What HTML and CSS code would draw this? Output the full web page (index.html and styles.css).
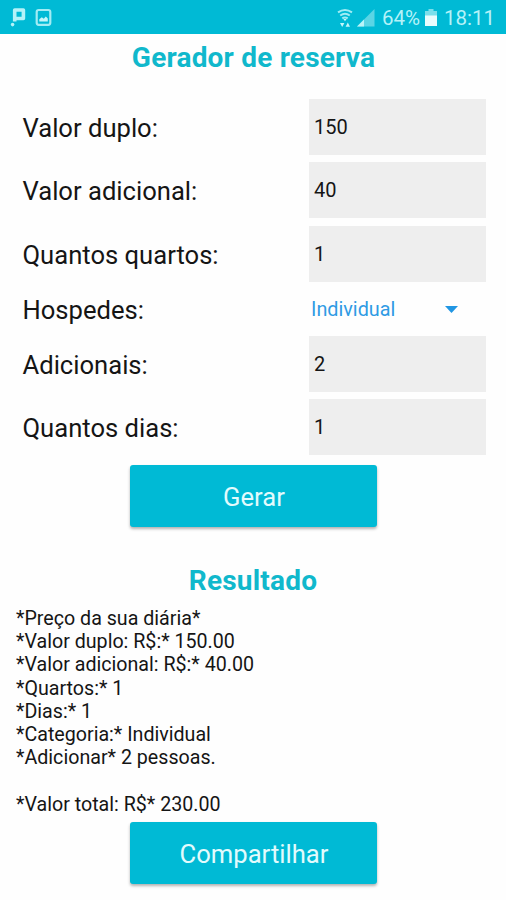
FILE: index.html
```html
<!DOCTYPE html>
<html lang="pt-BR">
<head>
<meta charset="utf-8">
<title>Gerador de reserva</title>
<link rel="stylesheet" href="styles.css">
</head>
<body>
<header class="status">
  <svg class="status-left" width="44" height="22" viewBox="0 0 44 22">
    <path fill="none" stroke="#b5f2f8" stroke-width="3.6" stroke-linejoin="round" d="M5.700 15.500V4h8.700v8.500H5.700"/>
    <circle cx="3.600" cy="18.600" r="1.800" fill="#b5f2f8"/>
    <rect x="27.700" y="4" width="13.600" height="14.800" rx="2" fill="none" stroke="#a2ecf4" stroke-width="2.200"/>
    <path fill="#c5f6fa" d="M30.300 15.500v-2.300l2.500-2 2 1.500 2-2.300 2 2.200v2.900z"/>
  </svg>
  <div class="status-right">
    <svg class="wifi" width="16" height="20" viewBox="0 0 16 20">
      <path fill="none" stroke="#a2ecf4" stroke-width="2" d="M1 4.400Q8-.4 15 4.400M3.200 7.500Q8 4 12.800 7.500M5.300 10.400Q8 8.400 10.700 10.400"/>
      <path fill="#c5f6fa" d="M6.400 11h3.200L8 13.200zM3 15h4.400l-2.200 4zM8.600 18.800l2.200-4.200 2.200 4.200z"/>
    </svg>
    <svg class="signal" width="18" height="18" viewBox="0 0 18 18">
      <path fill="#5bd5e5" d="M0 17.500 17.500 0v17.500z"/>
      <path fill="#b9f3f8" d="M0 17.500 7 10.500v7z"/>
    </svg>
    <span class="percent">64%</span>
    <svg class="battery" width="12" height="18" viewBox="0 0 12 18">
      <path fill="#7adfeb" d="M3.500 0h5v2H12v5H0V2h3.500z"/>
      <path fill="#e8fcfd" d="M0 6.500h12V17H0z"/>
    </svg>
    <span class="clock">18:11</span>
  </div>
</header>
<main>
  <h1 class="title">Gerador de reserva</h1>
  <form class="form">
    <div class="row"><span class="label">Valor duplo:</span><div class="field">150</div></div>
    <div class="row"><span class="label">Valor adicional:</span><div class="field">40</div></div>
    <div class="row"><span class="label">Quantos quartos:</span><div class="field">1</div></div>
    <div class="row row-picker"><span class="label">Hospedes:</span>
      <div class="picker"><span>Individual</span><svg width="13" height="7" viewBox="0 0 13 7"><path fill="#2196e3" d="M0 0h13L6.500 7z"/></svg></div>
    </div>
    <div class="row"><span class="label">Adicionais:</span><div class="field">2</div></div>
    <div class="row"><span class="label">Quantos dias:</span><div class="field">1</div></div>
  </form>
  <div class="button">Gerar</div>
  <h2 class="title title-result">Resultado</h2>
  <pre class="result">*Preço da sua diária*
*Valor duplo: R$:* 150.00
*Valor adicional: R$:* 40.00
*Quartos:* 1
*Dias:* 1
*Categoria:* Individual
*Adicionar* 2 pessoas.

*Valor total: R$* 230.00</pre>
  <div class="button">Compartilhar</div>
</main>
</body>
</html>
```
FILE: styles.css
```css
* { box-sizing: border-box; }
body {
  margin: 0;
  width: 506px;
  height: 900px;
  overflow: hidden;
  background: #fefefe;
  color: #151515;
  font-family: Roboto, sans-serif;
}
svg { display: block; }
.status {
  height: 34px;
  padding: 0 10px 0 9px;
  background: #00bad5;
  color: #b5f2f8;
  display: flex;
  align-items: center;
  justify-content: space-between;
  font-size: 20.5px;
}
.status-right { display: flex; align-items: center; padding-top: 1px; }
.signal { margin: 1px 7px 0 4px; }
.percent { width: 40px; white-space: nowrap; }
.battery { margin: 1px 7px 0 3px; }
.clock { width: 52px; white-space: nowrap; }
.title {
  margin: 0;
  height: 48px;
  line-height: 48px;
  text-align: center;
  text-indent: 1px;
  color: #10b8cc;
  font-size: 28px;
  letter-spacing: .2px;
  font-weight: 700;
}
.form {
  margin: 17px 20.5px 0 22.5px;
  display: flex;
  flex-direction: column;
  gap: 7.3px;
}
.row {
  height: 56px;
  display: flex;
  align-items: center;
  justify-content: space-between;
}
.label { font-size: 25.6px; padding-top: 2px; }
.field {
  width: 177px;
  height: 56px;
  padding-left: 5.5px;
  line-height: 57px;
  background: #eee;
  font-size: 20px;
}
.row-picker { height: 54.6px; margin: -7.3px 0; }
.picker {
  width: 177px;
  padding: 1px 27.5px 0 2.5px;
  display: flex;
  align-items: center;
  justify-content: space-between;
  color: #2f9be4;
  font-size: 19.8px;
}
.button {
  width: 247px;
  height: 62px;
  margin: 9.5px auto 0 130px;
  border-radius: 3px;
  background: #00bad5;
  box-shadow: 0 2px 3px rgba(0, 0, 0, .3);
  color: #e2fbfd;
  font-size: 25.6px;
  line-height: 64px;
  text-align: center;
  text-indent: 1px;
}
.title-result { margin-top: 30px; text-indent: 0; }
.result {
  margin: 2px 0 0 16px;
  font-family: inherit;
  font-size: 19.65px;
  line-height: 23.2px;
}
.result + .button { margin-top: 6px; }
```
